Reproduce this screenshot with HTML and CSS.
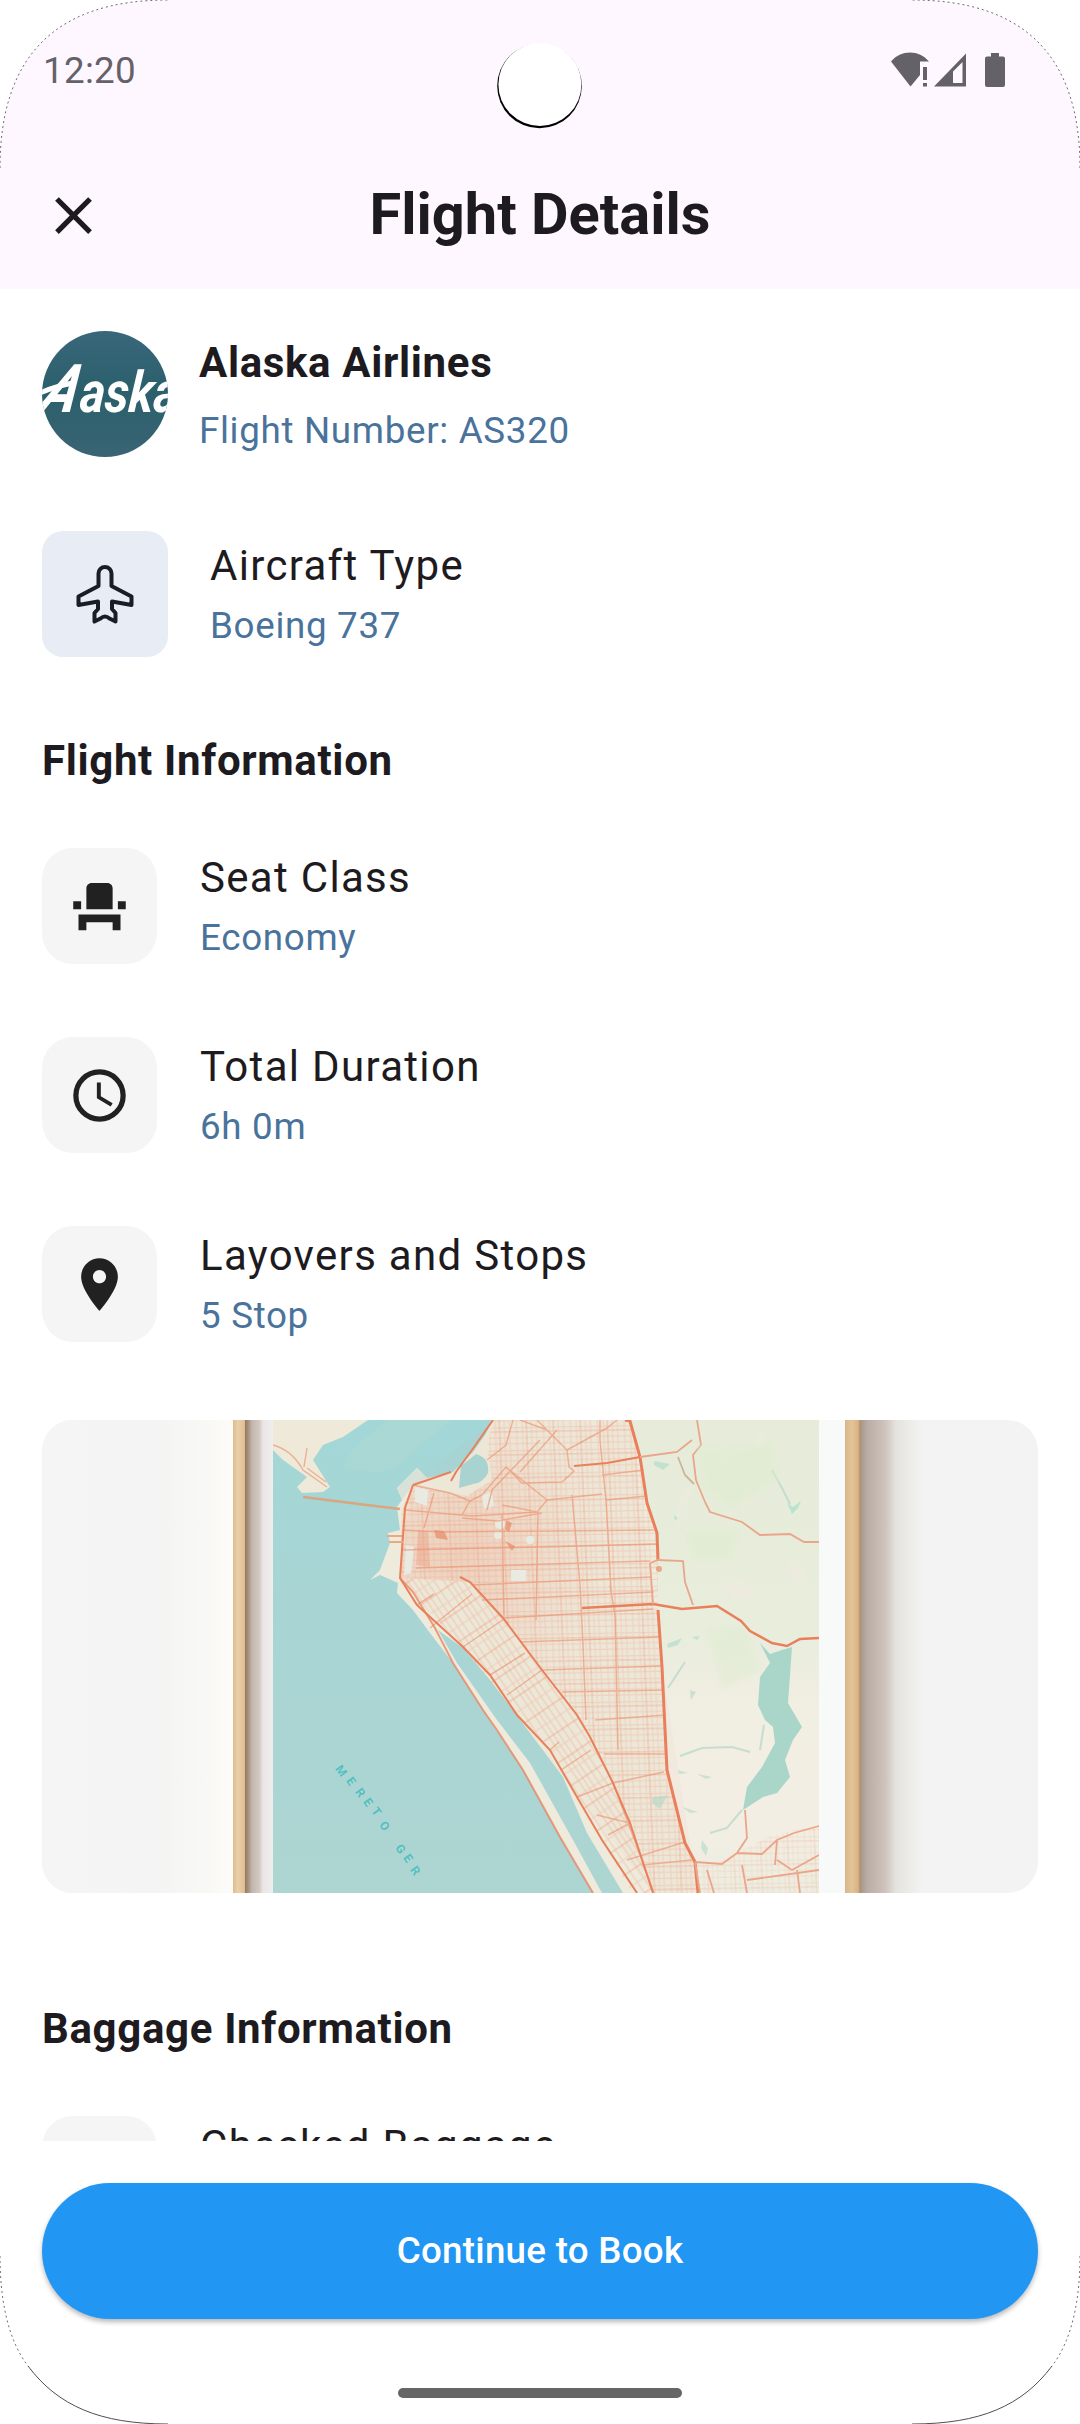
FILE: index.html
```html
<!DOCTYPE html>
<html lang="en">
<head>
<meta charset="utf-8">
<title>Flight Details</title>
<link rel="stylesheet" href="styles.css">
</head>
<body>
<div class="screen">
  <header class="top">
    <div class="status">
      <span class="time">12:20</span>
      <svg class="status-icons" width="120" height="40" viewBox="0 0 120 40">
        <path d="M0 9.5C10-2.5 28-2.5 38 9.5H29V23L19.500 34.500Z"/>
        <path d="M32 15h4v13h-4zM32 31h4v3.500h-4z"/>
        <path fill-rule="evenodd" d="M43 34.500 75 1.500V34.500ZM62 19.500V31H71.500V10Z"/>
        <path d="M100 1h8v3.500h4q2 0 2 2V33q0 2-2 2H96q-2 0-2-2V6.500q0-2 2-2h4z"/>
      </svg>
    </div>
    <div class="appbar">
      <svg class="close" viewBox="0 0 24 24"><path d="M19 6.410 17.590 5 12 10.590 6.410 5 5 6.410 10.590 12 5 17.590 6.410 19 12 13.410 17.590 19 19 17.590 13.410 12z"/></svg>
      <h1>Flight Details</h1>
    </div>
  </header>

  <main class="content">
    <section class="row airline">
      <svg class="avatar" viewBox="0 0 126 126">
        <defs>
          <linearGradient id="sky" x1="0" y1="0" x2="0" y2="1">
            <stop offset="0" stop-color="#38677a"/><stop offset=".5" stop-color="#2b5f6b"/><stop offset="1" stop-color="#3a6475"/>
          </linearGradient>
        </defs>
        <rect width="126" height="126" fill="url(#sky)"/>
        <path d="M-2 62Q14 55 31 52" fill="none" stroke="#fff" stroke-width="5"/>
        <g class="logo-text">
          <text transform="translate(-5 81) skewX(-22) scale(.82 1)" font-size="67">A</text>
          <text transform="translate(37 81) skewX(-5) scale(.84 1)" font-size="57">aska</text>
        </g>
      </svg>
      <div class="text">
        <p class="name">Alaska Airlines</p>
        <p class="sub">Flight Number: AS320</p>
      </div>
    </section>

    <section class="row aircraft">
      <div class="tile tile-blue">
        <svg width="60" height="60" viewBox="0 0 60 60">
          <path d="M23.500 22V9.500a6.500 6.500 0 0 1 13 0V22L56.500 32.500V41L37 37.500V45L40.500 49V57.500L34.500 54.500Q30 50.500 25.500 54.500L19.500 57.500V49L23 45V37.500L3.500 41V32.500Z"/>
        </svg>
      </div>
      <div class="text">
        <p class="title">Aircraft Type</p>
        <p class="sub">Boeing 737</p>
      </div>
    </section>

    <h2>Flight Information</h2>

    <section class="row info">
      <div class="tile"><svg viewBox="0 0 24 24"><path d="M4 18v3h3v-3h10v3h3v-6H4zM19 10h3v3h-3zM2 10h3v3H2zM17 13H7V5c0-1.100.9-2 2-2h6c1.100 0 2 .9 2 2z"/></svg></div>
      <div class="text"><p class="title">Seat Class</p><p class="sub">Economy</p></div>
    </section>
    <section class="row info">
      <div class="tile"><svg viewBox="0 0 24 24"><circle cx="12" cy="12" r="9" fill="none" stroke="#212121" stroke-width="2"/><path d="M12.500 7H11v6l5.250 3.150.75-1.230-4.500-2.670z"/></svg></div>
      <div class="text"><p class="title">Total Duration</p><p class="sub">6h 0m</p></div>
    </section>
    <section class="row info">
      <div class="tile"><svg viewBox="0 0 24 24"><path d="M12 2C8.130 2 5 5.130 5 9c0 5.250 7 13 7 13s7-7.750 7-13c0-3.870-3.130-7-7-7zm0 9.500c-1.380 0-2.500-1.120-2.500-2.500s1.120-2.500 2.500-2.500 2.500 1.120 2.500 2.500-1.120 2.500-2.500 2.500z"/></svg></div>
      <div class="text"><p class="title">Layovers and Stops</p><p class="sub">5 Stop</p></div>
    </section>

    <svg class="map" viewBox="0 0 996 473">
      <defs>
        <linearGradient id="wallL"><stop offset="0" stop-color="#f5f5f5"/><stop offset=".6" stop-color="#f4f4f4"/><stop offset=".85" stop-color="#f8f8f5"/><stop offset="1" stop-color="#fdfcf8"/></linearGradient>
        <linearGradient id="wood"><stop offset="0" stop-color="#dcbc90"/><stop offset=".4" stop-color="#ebcfa8"/><stop offset="1" stop-color="#dfbd92"/></linearGradient>
        <linearGradient id="woodR"><stop offset="0" stop-color="#d6b68a"/><stop offset=".4" stop-color="#e3c498"/><stop offset=".8" stop-color="#d9b585"/><stop offset="1" stop-color="#a98a66"/></linearGradient>
        <linearGradient id="lip"><stop offset="0" stop-color="#92765d"/><stop offset=".12" stop-color="#a89482"/><stop offset=".25" stop-color="#c3b8b0"/><stop offset=".5" stop-color="#d5c9c3"/><stop offset=".62" stop-color="#eae6e5"/><stop offset="1" stop-color="#f0eeef"/></linearGradient>
        <linearGradient id="shade"><stop offset="0" stop-color="#a8988d"/><stop offset=".1" stop-color="#b9aca4"/><stop offset=".4" stop-color="#cec3bd"/><stop offset=".5" stop-color="#dbd3ce"/><stop offset=".58" stop-color="#e4e3de"/><stop offset="1" stop-color="#f2f2f1"/></linearGradient>
        <linearGradient id="sea" x1="0" y1="0" x2="0" y2="1"><stop offset="0" stop-color="#a3d7d7"/><stop offset=".4" stop-color="#a8d5d4"/><stop offset="1" stop-color="#add5d2"/></linearGradient>
        <linearGradient id="hills" x1="0" y1="0" x2="0" y2="1"><stop offset="0" stop-color="#e6ecd9"/><stop offset=".45" stop-color="#e8eddc"/><stop offset=".6" stop-color="#f1eee2"/><stop offset=".85" stop-color="#f3eee3"/><stop offset="1" stop-color="#ecede0"/></linearGradient>
        <pattern id="grid" width="27" height="23" patternUnits="userSpaceOnUse" patternTransform="skewX(1.500) rotate(-1)">
          <path d="M0 3H27M0 9H27M0 16H27M3 0V23M8 0V23M15 0V23M21 0V23" fill="none" stroke="#ec9372" stroke-width="1.100" opacity=".24"/>
          <path d="M0 20H27M25 0V23" fill="none" stroke="#ea8763" stroke-width="1.300" opacity=".34"/>
        </pattern>
        <pattern id="diag" width="30" height="26" patternUnits="userSpaceOnUse" patternTransform="rotate(-34)">
          <path d="M0 1H30" fill="none" stroke="#ea8763" stroke-width="1.300" opacity=".4"/>
          <path d="M0 14H30M3 0V26M8 0V26M13 0V26M19 0V26M25 0V26" fill="none" stroke="#ec9372" stroke-width="1.200" opacity=".3"/>
        </pattern>
        <radialGradient id="core" gradientUnits="userSpaceOnUse" cx="420" cy="135" r="140"><stop offset="0" stop-color="#f0a183" stop-opacity=".32"/><stop offset="1" stop-color="#f0a183" stop-opacity="0"/></radialGradient>
        <clipPath id="print"><rect x="231" width="546" height="473"/></clipPath>
      </defs>
      <rect width="996" height="473" fill="#f3f3f3"/>
      <rect width="192" height="473" fill="url(#wallL)"/>
      <rect x="191" width="12" height="473" fill="url(#wood)"/>
      <rect x="203" width="29" height="473" fill="url(#lip)"/>
      <rect x="777" width="27" height="473" fill="#f8f9f9"/>
      <rect x="803" width="16" height="473" fill="url(#woodR)"/>
      <rect x="819" width="60" height="473" fill="url(#shade)"/>

      <g class="print" clip-path="url(#print)">
        <rect x="231" width="546" height="473" fill="url(#sea)"/>
        <path fill="#b2d9d3" d="M345 0H410L385 20 350 50 335 52 300 48 310 30Z" opacity=".4"/>
        <path fill="#eee9d8" d="M231 0H326L301 17 281 25 271 40 288 67 281 72 260 73 255 67 265 57 241 40 231 30Z"/>
        <path fill="#eeebdd" d="M451 0 443 15 431 32 411 52 385 58 375 48 355 68 360 80 355 87 358 110 346 113 348 123 338 150 328 160 338 155 356 163 355 173 371 190 388 213 411 243 441 290 481 350 518 417 551 473H560L531 420 488 343 455 300 415 243 396 210 421 228 448 260 488 313 521 357 545 413 581 473H777V0Z"/>
        <path fill="#d8e2d8" d="M375 48 355 68 360 80 371 65 385 58Z"/>
        <path fill="#a5d6d4" d="M434 34Q448 38 446 53 441 63 431 64L417 68 419 46Z"/>
        <path fill="url(#hills)" d="M588 0 598 37 605 83 615 113 616 190 620 247 625 350 643 423 653 442 656 473H777V0Z"/>

        <path fill="url(#grid)" d="M451 0 445 28 450 60 425 76 370 65 360 90 358 158 428 162 461 198 500 250 535 295 571 363 588 403 611 473H656L653 442 643 423 625 350 620 247 616 190 616 113 605 83 588 0Z"/>
        <path fill="url(#core)" d="M451 0 450 60 425 76 370 65 360 90 358 158 428 162 500 250 620 247 616 113 588 0Z"/>
        <path fill="#f0a183" opacity=".05" d="M451 0 370 65 358 158 421 227 611 473H656L620 247 588 0Z"/>
        <path fill="url(#diag)" d="M358 158 428 162 461 198 500 250 535 295 571 363 588 403 611 473H590L535 377 508 330 475 295 421 227 385 190Z"/>
        <path fill="url(#grid)" opacity=".6" d="M656 473 653 442 670 445 695 433 730 415 777 405V473Z"/>

        <g fill="#e9ebe2"><circle cx="458" cy="104" r="5"/><circle cx="456" cy="115" r="4"/><circle cx="488" cy="120" r="4"/><path d="M469 150h15v11h-15zM373 67l13 3-1 16-12-4zM364 125l8 2-3 26-7 2zM440 75l10-3 2 14-10 3z"/></g>
        <g fill="#e78661" opacity=".65"><path d="M392 110l10 1 4 9-12-2zM464 100l6 3-3 9-4-3zM463 121l10 5-3 5z"/><circle cx="617" cy="149" r="3"/></g>
        <path fill="#eb9b7d" opacity=".4" d="M376 111l10 1 2 35-14-2z"/>

        <g class="minor">
          <path d="M231 25Q250 30 261 50L285 67M265 48 284 62M262 47 265 28"/>
          <path d="M495 0 525 30 527 47 532 51 520 62 480 63 464 47 440 75 428 81 420 95M464 47 505 80 495 92 460 85M505 80 560 74M525 30 565 8 575 0M558 0 558 20 564 80 569 170M471 0 464 25 445 40M515 10 478 52M478 0 505 10M498 20 450 70 445 90"/>
          <path d="M371 65 408 73 428 81M363 90 430 96 495 92M360 110 400 112 612 110M420 98 455 101 500 93M392 73 382 108M360 130 500 127 615 124M374 148 608 141M430 165 610 157M440 180 612 172M461 198 611 189M478 222 618 217M500 250 620 246M520 272 622 270M553 300 624 295M562 334 625 334"/>
          <path d="M530 75 538 165 541 225 544 300M568 165 573 195 576 330M564 80 605 76M560 55 602 50M496 92 494 200M460 95 462 195"/>
          <path d="M375 185 392 174M388 208 430 174M421 227 462 199M448 255 483 233M465 275 500 250M519 350 549 330M508 330 517 322M535 377 571 363 622 352M571 363 600 440 612 473M555 395 588 403M585 440 643 422M600 445 650 440M588 403 566 415"/>
        </g>
        <g class="road">
          <path d="M451 0 430 30 414 52 409 61M371 65 409 52M371 65 363 88 358 158 375 185 421 227 448 255 475 295 508 330 535 377 560 420 595 473"/>
          <path d="M358 158 371 172 393 208 411 243 441 290 455 310 481 350 518 417 551 473" opacity=".75"/>
          <path d="M418 157 428 162 461 198 500 250 535 295 548 317 571 363 588 403 611 473"/>
          <path d="M532 46 565 43 598 37"/>
        </g>
        <g class="highway">
          <path d="M583 0 588 1 598 37 605 83 615 113 616 140M616 190 620 247 625 350 643 423 653 442 656 473"/>
          <path d="M540 188 611 184 640 189 675 186 699 201 708 211 730 223 745 226 758 219 777 218" stroke-width="2.500"/>
        </g>
        <g class="country">
          <path d="M655 0 659 25 651 35 654 60 663 82 668 92 700 102 718 115 748 114 762 122 777 122"/>
          <path d="M598 37 635 32 650 20M608 143 616 140 641 141 643 162 651 185M608 143 611 184"/>
          <path d="M653 442 680 444 695 433 705 418 703 390M695 433 720 434 735 420 752 413 777 406M735 440 750 450 777 435M700 445 705 473M665 450 672 473M705 460 777 450M735 420 733 445M653 442 658 473M755 450 758 473"/>
          <path d="M636 37 643 55 652 64" stroke="#c9b69b"/>
        </g>
        <path d="M261 77 325 85 358 89" fill="none" stroke="#d8a67f" stroke-width="2.500"/>
        <path d="M345 116H360M347 122H362" fill="none" stroke="#eda882" stroke-width="2"/>

        <path fill="#a9d6c9" d="M718 223 728 234 740 230 750 227 746 283 760 307 751 320 743 340 748 357 735 373 721 377 701 390 705 367 720 347 733 323 731 307 723 300 716 285 718 257 728 243Z"/>
        <g fill="#a9d8c8" opacity=".55"><path d="M612 41l16 3-7 6-9-5zM625 224l15-6-4 7-10 3zM650 217l8-1-3 4zM610 378l16-3-8 14-8-6zM636 350l10 3-9 1zM655 354l15 3-6 2zM640 387l16 5-8 1zM660 420l6 8-2 8-5-8zM648 270l6 2-5 8z"/><path d="M745 83l6 4 8-6-3 7-6 6zM632 95l4 3-3 3z" fill="#93dcc4"/></g>
        <g fill="none" stroke="#b4d6cb" stroke-width="2" opacity=".7"><path d="M638 336 660 328 690 327 708 332M700 390 685 408 668 413M722 305 718 330M626 268 643 242M730 50 740 68 748 84"/></g>
        <g class="patches" fill="#f1eade" opacity=".6"><path d="M717 15 724 6 720 30 712 25zM676 35 692 30 680 47zM705 67 710 83 700 80zM675 165 700 160 715 175 700 180 685 172zM748 137 762 150 758 165 748 158zM640 72 652 65 640 90 632 120z"/></g>
        <g class="patches" fill="#dfecd1" opacity=".5"><path d="M655 25Q700 30 730 20L740 60 690 90 660 70zM640 110 700 110 690 140 650 140zM665 210 700 205 720 250 680 270z"/></g>
        <g class="sea-label">
          <text x="293 304 313 321 329 337 353 361 368" y="349 361 372 382 391 405 428 438 450" rotate="54">MERETOGER</text>
        </g>
      </g>
    </svg>

    <h2 class="baggage">Baggage Information</h2>
    <section class="row info">
      <div class="tile"></div>
      <div class="text"><p class="title">Checked Baggage</p></div>
    </section>
  </main>

  <footer class="footer">
    <button class="book" type="button">Continue to Book</button>
    <div class="gesture"></div>
  </footer>

  <svg class="bezel" viewBox="0 0 1080 2424">
    <g fill="#fff" stroke="none">
      <path d="M0 0V168C0 56 56 0 168 0Z"/><path d="M1080 0V168C1080 56 1024 0 912 0Z"/>
    </g>
    <g fill="none" stroke="#4a484b" stroke-width=".8">
      <path stroke-dasharray="2 3" d="M0 168C0 56 56 0 168 0M1080 168C1080 56 1024 0 912 0"/>
      <path stroke-dasharray="2 3" d="M0 2256C0 2300 8 2340 28 2366M1080 2256C1080 2300 1072 2340 1052 2366"/>
      <path d="M28 2366C58 2406 100 2424 168 2424M1052 2366C1022 2406 980 2424 912 2424" stroke="#222"/>
    </g>
    <circle cx="539.500" cy="86" r="42.300" fill="#000"/>
    <circle cx="539.900" cy="84.500" r="41.500" fill="#fff"/>
  </svg>
</div>
</body>
</html>
```
FILE: styles.css
```css
* { box-sizing: border-box; margin: 0; padding: 0; }

body {
  width: 1080px;
  height: 2424px;
  overflow: hidden;
  background: #fff;
  color: #1d1b20;
  font-family: Roboto, "Liberation Sans", sans-serif;
}

.screen {
  position: relative;
  display: flex;
  flex-direction: column;
  width: 1080px;
  height: 2424px;
}

.top { flex: none; height: 289px; background: #fef7ff; }

.status {
  display: flex;
  justify-content: space-between;
  align-items: center;
  height: 142px;
  padding: 0 69px 0 43px;
}
.time { font-size: 36.75px; line-height: 44px; letter-spacing: .3px; color: #656168; }
.status-icons { margin-top: 2px; fill: #656168; }

.appbar {
  display: grid;
  grid-template-columns: 147px 1fr 147px;
  align-items: center;
  height: 147px;
}
.close { width: 63px; height: 63px; margin-left: 42px; fill: #1d1b20; }
h1 { padding-bottom: 3px; font-size: 57.75px; line-height: 72px; font-weight: 700; text-align: center; white-space: nowrap; }

.content {
  flex: none;
  height: 1852px;
  padding: 42px 42px 0;
  overflow: hidden;
}

.row { display: flex; }
.row p { white-space: nowrap; }

.name { font-size: 42px; line-height: 63px; font-weight: 700; letter-spacing: .66px; }
.title { font-size: 42px; line-height: 63px; letter-spacing: 1.3125px; }
.sub { margin-top: 3px; font-size: 36.75px; line-height: 52.5px; letter-spacing: .68px; color: #4a739c; }

.airline { gap: 31px; height: 126px; }
.airline .sub { margin-top: 11px; }
.avatar { width: 126px; height: 126px; border-radius: 50%; }
.logo-text { fill: #fff; font-weight: 700; font-style: italic; }

.aircraft { gap: 42px; height: 126px; margin-top: 74px; }
.aircraft .text { padding-top: 3px; }

.tile {
  display: flex;
  align-items: center;
  justify-content: center;
  flex: none;
  width: 115px;
  height: 116px;
  margin-top: 2px;
  border-radius: 31px;
  background: #f5f5f5;
}
.tile svg { width: 63px; height: 63px; fill: #212121; }
.tile-blue { width: 126px; height: 126px; margin: 0; border-radius: 21px; background: #e8edf5; }
.tile-blue svg { width: 60px; height: 60px; fill: none; stroke: #1a1d25; stroke-width: 4; stroke-linejoin: round; filter: blur(.6px); }

h2 { margin-top: 72px; font-size: 42px; line-height: 63px; font-weight: 700; letter-spacing: .66px; }

.info { gap: 43px; height: 119px; margin-top: 70px; }
h2 + .info { margin-top: 54px; }

.map { display: block; width: 996px; height: 473px; margin-top: 77px; border-radius: 31px; }
.print { filter: blur(.7px); }
.patches { filter: blur(2px); }
.minor { fill: none; stroke: #eb8f6c; stroke-width: 1.5; opacity: .6; }
.road { fill: none; stroke: #e8805c; stroke-width: 2; }
.highway { fill: none; stroke: #e97f5b; stroke-width: 3; }
.country { fill: none; stroke: #eba58a; stroke-width: 1.8; }
.sea-label { fill: #52bfc1; font-size: 12px; font-weight: 700; }

.baggage { margin-top: 104px; }

.footer {
  display: flex;
  flex-direction: column;
  align-items: center;
  flex: 1;
  padding-top: 42px;
}
.book {
  width: 996px;
  height: 136px;
  padding-top: 1px;
  border: 0;
  border-radius: 68px;
  background: #2196f3;
  box-shadow: 0 3px 5px rgba(0, 0, 0, .28);
  color: #fff;
  font: 500 36.75px/52.5px Roboto, "Liberation Sans", sans-serif;
  letter-spacing: .26px;
}
.gesture { width: 284px; height: 10px; margin-top: 69px; border-radius: 5px; background: #666; }

.bezel { position: absolute; inset: 0; width: 1080px; height: 2424px; pointer-events: none; }
```
